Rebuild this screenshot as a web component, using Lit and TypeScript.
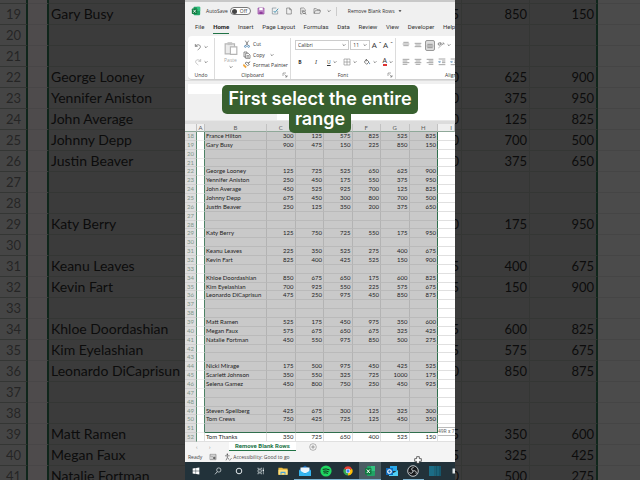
import { LitElement, html, css, svg, nothing } from "lit";
import { customElement, property } from "lit/decorators.js";
import { classMap } from "lit/directives/class-map.js";

type Row = { n: number; name?: string; v?: number[] };

const people: Record<number, [string, number[]]> = {
  18: ["France Hilton", [300, 125, 575, 825, 525, 825]],
  19: ["Gary Busy", [900, 475, 150, 225, 850, 150]],
  22: ["George Looney", [125, 725, 525, 650, 625, 900]],
  23: ["Yennifer Aniston", [250, 450, 175, 550, 375, 950]],
  24: ["John Average", [450, 525, 925, 700, 125, 825]],
  25: ["Johnny Depp", [675, 450, 300, 800, 700, 500]],
  26: ["Justin Beaver", [250, 125, 350, 200, 375, 650]],
  29: ["Katy Berry", [125, 750, 725, 550, 175, 950]],
  31: ["Keanu Leaves", [225, 350, 525, 275, 400, 675]],
  32: ["Kevin Fart", [825, 400, 425, 525, 150, 900]],
  34: ["Khloe Doordashian", [850, 675, 650, 175, 600, 825]],
  35: ["Kim Eyelashian", [700, 925, 550, 225, 575, 675]],
  36: ["Leonardo DiCaprisun", [475, 250, 975, 450, 850, 875]],
  39: ["Matt Ramen", [525, 175, 450, 975, 350, 600]],
  40: ["Megan Faux", [575, 675, 650, 675, 325, 425]],
  41: ["Natalie Fortman", [450, 550, 975, 850, 500, 275]],
  44: ["Nicki Mirage", [175, 500, 975, 450, 425, 525]],
  45: ["Scarlett Johnson", [350, 550, 325, 725, 1000, 175]],
  46: ["Selena Gamez", [450, 800, 750, 250, 450, 925]],
  49: ["Steven Spellberg", [425, 675, 300, 125, 325, 300]],
  50: ["Tom Crews", [750, 425, 725, 125, 450, 350]],
  52: ["Tom Thanks", [350, 725, 650, 400, 525, 150]],
};

const rowsBetween = (from: number, to: number): Row[] =>
  Array.from({ length: to - from + 1 }, (_, i) => {
    const p = people[from + i];
    return { n: from + i, name: p?.[0], v: p?.[1] };
  });

const chevron = html`<svg class="chev" viewBox="0 0 4 4"><path d="M.6 1.3 2 2.7 3.4 1.3" fill="none" stroke="#555" stroke-width=".7"/></svg>`;

const line = (d: string, color = "#555", w = 0.8) =>
  svg`<path d=${d} fill="none" stroke=${color} stroke-width=${w}/>`;

const glyphs: Record<string, unknown> = {
  excel: svg`<rect x="3" y="1" width="8" height="10" rx="1" fill="#21a366"/><path d="M7 1h4v5H7z" fill="#33c481"/><rect x="1" y="3" width="6.500" height="6.500" rx=".8" fill="#107c41"/>${line("M2.800 4.500 5.800 8M5.800 4.500 2.800 8", "#fff", 1)}`,
  save: svg`<path d="M1.500 1.500h9v9h-9z" fill="#c793cf" stroke="#8e3c9b"/><path d="M3.500 1.500h5v3h-5z" fill="#fff"/><path d="M3.500 7h5v3.500h-5z" fill="#8e3c9b"/>`,
  check: svg`${line("M10 6v4.500H2v-9h6", "#60727e")}${line("M4 6 6 8.200 10.800 2.500", "#2b87a8", 1.300)}`,
  page: line("M2.500 1.500H7L9.500 4v6.500h-7zM7 1.500V4h2.500"),
  preview: svg`${line("M5 10.500H2.500v-9H7L9.500 4v2M4 5h3M4 7h2")}<circle cx="7.500" cy="8" r="2" fill="none" stroke="#444" stroke-width=".9"/>${line("M9 9.500 11 11.300", "#444", 1)}`,
  open: line("M1.500 9.500V2.500h3.500l1 1.500h4v1.500M1.500 9.500 3.500 5.500H11.500L9.800 9.500z"),
  undo: line("M2 1.500V5h3.500M2.200 5C4 2 9 1.800 9.500 5.200 9.700 7.500 7.500 9 5.500 10.500", "#555", 1),
  redo: line("M10 1.500V5H6.500M9.800 5C8 2 3 1.800 2.500 5.200 2.300 7.500 4.500 9 6.500 10.500", "#aaa", 1),
  paste: svg`<path d="M1 2.500h8V11H1z" fill="#ececec" stroke="#b5b5b5"/><path d="M3 1h4v2.500H3z" fill="#c4c4c4"/><path d="M5.500 5H11v6.500H5.500z" fill="#fff" stroke="#b5b5b5"/>`,
  cut: svg`${line("M3.500 1 7.800 8.300M8.500 1 4.200 8.300", "#444", 0.9)}<circle cx="3.600" cy="9.600" r="1.400" fill="none" stroke="#2b6fa8"/><circle cx="8.400" cy="9.600" r="1.400" fill="none" stroke="#2b6fa8"/>`,
  copy: svg`${line("M4 9H1.500V1.500H6V3", "#444", 0.9)}${line("M4 3.500h4L10.500 6v5H4zM5.500 7h3.500M5.500 9h3.500", "#444", 0.9)}`,
  brush: svg`<path d="M1 4 5.500 8.500 4 11 0 7z" fill="#f0a63a"/><path d="M3 3 6.800 7 9.500 5.500 6 1.500z" fill="#fff" stroke="#444" stroke-width=".9"/>${line("M7.500 3.500 10.800 1", "#444", 1.300)}`,
  grid: svg`${line("M1.500 1.500h9v9h-9z", "#777", 0.8)}${line("M6 1.500v9M1.500 6h9", "#777", 0.8)}`,
  fill: svg`${line("M5 2 9 6 5.500 9.500 2 6zM5 2v3", "#444", 1)}<path d="M10 6.500q1.500 2 0 3-1.500-1 0-3" fill="#2b6fa8"/>`,
  top: line("M2 2h8M1 4.500h10M2 7h8"),
  middle: line("M1 3.500h10M2 6h8M1 8.500h10"),
  bottom: line("M2 5h8M1 7.500h10M2 10h8"),
  left: line("M1 2h10M1 4.500h7M1 7h10M1 9.500h7"),
  center: line("M1 2h10M2.500 4.500h7M1 7h10M2.500 9.500h7"),
  right: line("M1 2h10M4 4.500h7M1 7h10M4 9.500h7"),
  indent: svg`${line("M1 1.500h10M6 4.500h5M6 7h5M1 10h10")}${line("M4.500 5.800H1M2.500 4.300 1 5.800 2.500 7.300", "#2b6fa8")}`,
  orient: svg`${line("M2 10.500 10.500 3M10.500 3H8M10.500 3v2.500", "#777")}<circle cx="3.500" cy="4.500" r="1.800" fill="none" stroke="#555"/>${line("M5 1.500 8 6", "#555")}`,
  launch: line("M2 8V2h6M5 5l5 5M10 6v4H6", "#555", 1),
  macro: svg`${line("M1.500 2h9v8h-9zM1.500 4.500h9M4.500 4.500V10", "#666")}<circle cx="8" cy="7.500" r="2" fill="#666"/>`,
  access: svg`<circle cx="5" cy="2" r="1.200" fill="#555"/>${line("M1.500 4.200h7M5 4.200v3M5 7 3 11M5.500 7 7 9", "#555", 1)}${line("M7 9.500l1.500 1.500L11.500 7.500", "#555", 0.9)}`,
  plus: svg`<circle cx="6" cy="6" r="5" fill="none" stroke="#777" stroke-width=".8"/>${line("M6 3.300v5.400M3.300 6h5.400", "#777", 1)}`,
  windows: svg`<path d="M1 2.300 5.500 1.600V5.700H1zM6.100 1.500 11 .8V5.700H6.100zM1 6.300h4.500v4.100L1 9.700zM6.100 6.300H11v4.900L6.100 10.500z" fill="#fff"/>`,
  search: svg`<circle cx="7.200" cy="4.500" r="3.200" fill="none" stroke="#e8eef0"/>${line("M5 7 1.500 11", "#e8eef0", 1.100)}`,
  cortana: svg`<circle cx="6" cy="6" r="4.200" fill="none" stroke="#eef3f5" stroke-width="1.400"/>`,
  tasks: svg`${line("M1.500 1v2h5V1M1.500 11V9h5v2M1.500 4.300h5v3.400h-5z", "#e8eef0", 0.9)}${line("M9.500 1v10", "#e8eef0", 0.9)}<path d="M8.500 4h2v2h-2z" fill="#e8eef0"/>`,
  folder: svg`<path d="M.5 2h4.500l1 1h5.500v7.500H.5z" fill="#e9b93c"/><path d="M.5 4.500h11v6H.5z" fill="#ffdf7a"/><path d="M3 7h6v3.500H7.800V8.500H4.200v2H3z" fill="#4aa3d8"/>`,
  mail: svg`<path d="M0 5 6 .5 12 5v6H0z" fill="#1066b5"/><path d="M1.500 2.500h9V8h-9z" fill="#eaf6fd"/><path d="M0 5 6 8.500 12 5v6H0z" fill="#35b6f0"/>`,
  spotify: svg`<circle cx="6" cy="6" r="5.600" fill="#1ed760"/>${line("M2.700 4.400q3.500-1.200 6.800.5M3.200 6.300q2.900-.9 5.500.5M3.600 8q2.300-.6 4.300.4", "#10301d", 1)}`,
  chrome: svg`<path d="M6 6 1.200 3.200A5.500 5.500 0 0 1 10.800 3.200z" fill="#e94235"/><path d="M6 6 1.200 3.200A5.500 5.500 0 0 0 6 11.500z" fill="#34a853"/><path d="M6 6 10.800 3.200A5.500 5.500 0 0 1 6 11.500z" fill="#fbbc05"/><circle cx="6" cy="6" r="2.700" fill="#fff"/><circle cx="6" cy="6" r="2" fill="#4285f4"/>`,
  outlook: svg`<path d="M4 1h7v5H4z" fill="#28a8ea"/><path d="M3 5l4.500 3L12 5v6H3z" fill="#50d0f5"/><path d="M0 3h7v7H0z" fill="#0f6cbd"/><circle cx="3.500" cy="6.500" r="1.800" fill="none" stroke="#fff" stroke-width="1.100"/>`,
  obs: svg`<circle cx="6" cy="6" r="5.300" fill="#17191c" stroke="#d5d9db" stroke-width=".9"/>${line("M6 6C4 5 4.500 2.500 6.500 2.500M6 6c2-1 4 .8 3 2.700M6 6c0 2.200-2.300 3-3.600 1.500", "#d5d9db", 1)}`,
  panels: svg`<path d="M0 1h5.500v10H0z" fill="#1b6d86"/><path d="M6 1h6v10H6z" fill="#15566b"/>${line("M6 1v10M9 1v10", "#2c90ab", 0.5)}`,
  sheet: svg`<path d="M7 1h5v10H7z" fill="#dfe6e9"/>`,
};

const icon = (name: string, cls = "s8") =>
  html`<svg class="ico ${cls}" viewBox="0 0 12 12" aria-hidden="true">${glyphs[name]}</svg>`;

const tool = (label: string, name: string, opts: { drop?: boolean; on?: boolean; cls?: string } = {}) => html`
  <button class=${classMap({ tool: true, on: !!opts.on })} aria-label=${label}>
    ${icon(name, opts.cls)}${opts.drop ? chevron : nothing}
  </button>`;

const reset = css`
  * { box-sizing: border-box; }
  button, input, select {
    font: inherit; color: inherit; background: none; border: 0; padding: 0; margin: 0;
    border-radius: 0; appearance: none; min-width: 0;
  }
  .ico { display: block; flex: none; }
  .s6 { width: 6px; height: 6px; }
  .s8 { width: 8px; height: 8px; }
  .s10 { width: 10px; height: 10px; }
  .s12 { width: 12px; height: 12px; }
  .s14 { width: 14px; height: 14px; }
  .chev { width: 4px; height: 4px; flex: none; display: block; }
`;

@customElement("zoomed-sheet")
export class ZoomedSheet extends LitElement {
  @property() side: "left" | "right" = "left";

  static styles = [reset, css`
    :host { display: flex; overflow: hidden; background: #3b3b3b; min-width: 0; }
    :host([side="right"]) { justify-content: flex-end; }
    table { border-collapse: separate; border-spacing: 0; table-layout: fixed; flex: none;
      font: 13px/20px Lato, "Noto Sans", sans-serif; color: #0c0c0c; align-self: flex-start; }
    .l { width: 100%; }
    .r { width: 246px; }
    tr { height: 21px; }
    tr.part { height: 4px; }
    tr.part > * { line-height: 3px; }
    td, th { padding: 0; font-weight: 400; border-bottom: 1px solid #343634; white-space: nowrap; overflow: hidden; }
    th { width: 28px; padding-right: 5px; text-align: right; color: #252525; background: #454545;
      border-right: 2px solid #10261b; }
    .a { width: 21px; background: #4e4b4c; border-right: 2px solid #10261b; border-bottom-color: #484647; }
    .name { padding-left: 2px; font-size: 14px; }
    .num { width: 68px; text-align: right; padding-right: 2px; border-right: 1px solid #343634; }
    .last { border-right: 2px solid #10261b; }
    .out { background: #4b4b4b; border-bottom-color: #454545; }
  `];

  render() {
    const rows = rowsBetween(18, 41);
    const left = this.side === "left";
    return html`<table class=${left ? "l" : "r"}>
      <tbody>
        ${rows.map((r) => {
          const hidden = r.n === 18;
          return html`<tr class=${hidden ? "part" : ""}>
            ${left
              ? html`<th scope="row">${hidden ? "" : r.n}</th><td class="a"></td><td class="name">${hidden ? "" : r.name}</td>`
              : html`${[3, 4, 5].map((c) => html`<td class="num ${c === 5 ? "last" : ""}">${hidden ? "" : r.v?.[c]}</td>`)}<td class="out"></td>`}
          </tr>`;
        })}
      </tbody>
    </table>`;
  }
}

@customElement("excel-ribbon")
export class ExcelRibbon extends LitElement {
  static styles = [reset, css`
    :host { display: block; background: #f0f0f0; color: #333; font: 5px/8px "Open Sans", sans-serif;
      border-top: 2px solid #c8c8c8; overflow: hidden; white-space: nowrap; }
    .title { display: flex; align-items: center; height: 18px; padding-left: 6px; gap: 5px; }
    .auto { display: flex; align-items: center; gap: 2px; position: relative; }
    .switch { display: flex; align-items: center; gap: 3px; width: 21px; height: 8px; border: 1px solid #777;
      border-radius: 4px; background: #fff; font-size: 5px; line-height: 6px; padding-left: 1px; }
    .knob { width: 5px; height: 5px; border-radius: 50%; background: #444; }
    .auto input { position: absolute; inset: 0; opacity: 0; }
    .quick { display: flex; align-items: center; gap: 4px; }
    .sep { width: 1px; height: 9px; background: #ccc; margin-right: 6px; }
    .file { display: flex; align-items: center; gap: 3px; }
    .tabs { display: flex; gap: 9px; padding-left: 10px; height: 16px; font: 6px/8px Roboto, sans-serif; }
    .tabs button { height: 14px; border-bottom: 1px solid transparent; }
    .tabs .active { font-weight: 700; border-color: #217346; color: #222; }
    .ribbon { display: flex; height: 44px; margin-left: 3px; padding-top: 2px; background: #fff; border-radius: 4px 0 0 4px;
      border-bottom: 1px solid #d0d0d0; }
    .group { display: grid; grid-template-rows: 1fr 8px; flex: none; border-right: 1px solid #dcdcdc; }
    .undo { width: 27px; }
    .clip { width: 76px; }
    .font { width: 105px; }
    .align { width: 120px; border: 0; }
    .foot { display: flex; align-items: center; justify-content: center; position: relative; }
    .foot .ico { position: absolute; right: 2px; }
    .col { display: flex; flex-direction: column; justify-content: space-evenly; align-items: center; }
    .tool { display: flex; align-items: center; justify-content: center; gap: 2px; min-width: 10px; height: 11px; }
    .tool.on { background: #ddd; border: 1px solid #999; border-radius: 2px; }
    .clipbody { display: grid; grid-template-columns: 25px 1fr; padding-left: 3px; }
    .paste { display: flex; flex-direction: column; align-items: center; color: #aaa; justify-content: center; gap: 1px; }
    .cmds { display: flex; flex-direction: column; justify-content: space-evenly; }
    .cmds button { display: flex; align-items: center; gap: 2px; height: 9px; }
    .cmds .chev { margin-left: 3px; }
    .lines { display: flex; flex-direction: column; padding: 1px 2px 3px 4px; justify-content: space-between; }
    .line { display: flex; align-items: center; justify-content: space-between; height: 12px; }
    .combo { display: flex; align-items: center; border: 1px solid #ccc; height: 10px; padding: 0 2px; }
    .combo select { flex: 1; }
    .face { width: 54px; }
    .size { width: 20px; }
    .big { font: 8px/8px "Open Sans", sans-serif; }
    .b { font-weight: 700; }
    .i { font-style: italic; font-family: "Liberation Serif", serif; font-size: 6px; }
    .u { text-decoration: underline; }
    .red { border-bottom: 2px solid #d33; line-height: 6px; font-size: 7px; }
    .alignlines { padding-left: 5px; }
    .alignlines .line { justify-content: flex-start; gap: 2px; }
    .alignlabel { justify-content: flex-start; padding-left: 49px; }
    .formula { display: grid; grid-template-columns: 89px 1fr; height: 40px; padding: 3px 0 0 3px; border-top: 1px solid #ddd; align-items: start; }
    .formula input { width: 100%; background: #fff; }
    .cell { height: 10px; }
    .fx { height: 36px; }
  `];

  render() {
    return html`
      <div class="title">
        ${icon("excel", "s10")}
        <label class="auto">AutoSave
          <input type="checkbox" role="switch" aria-label="AutoSave">
          <span class="switch"><span class="knob"></span>Off</span>
        </label>
        <div class="quick">
          ${tool("Save", "save", { cls: "s8" })}
          ${tool("Check accessibility", "check")}
          ${tool("New", "page")}
          ${tool("Print preview", "preview")}
          ${tool("Open", "open")}
        </div>
        ${chevron}<span class="sep"></span>
        <span class="file">Remove Blank Rows <svg class="chev" viewBox="0 0 4 4"><path d="M.5 1.200h3L2 3z" fill="#333"/></svg></span>
      </div>
      <nav class="tabs">
        ${["File", "Home", "Insert", "Page Layout", "Formulas", "Data", "Review", "View", "Developer", "Help"].map(
          (t) => html`<button class=${t === "Home" ? "active" : ""}>${t}</button>`)}
      </nav>
      <div class="ribbon">
        <section class="group undo">
          <div class="col">${tool("Undo", "undo", { drop: true })}${tool("Redo", "redo", { drop: true })}</div>
          <div class="foot">Undo</div>
        </section>
        <section class="group clip">
          <div class="clipbody">
            <button class="paste">${icon("paste", "s14")}<span>Paste</span>${chevron}</button>
            <div class="cmds">
              <button>${icon("cut")}Cut</button>
              <button>${icon("copy")}Copy ${chevron}</button>
              <button>${icon("brush")}Format Painter</button>
            </div>
          </div>
          <div class="foot">Clipboard ${icon("launch", "s6")}</div>
        </section>
        <section class="group font">
          <div class="lines">
            <div class="line">
              <span class="combo face"><select aria-label="Font"><option>Calibri</option></select>${chevron}</span>
              <span class="combo size"><select aria-label="Font size"><option>11</option></select>${chevron}</span>
              <button class="tool big" aria-label="Increase font size">A<sup>ˆ</sup></button>
              <button class="tool big" aria-label="Decrease font size">A<sup>ˇ</sup></button>
            </div>
            <div class="line">
              <button class="tool b">B</button>
              <button class="tool i">I</button>
              <button class="tool"><span class="u">U</span>${chevron}</button>
              ${tool("Borders", "grid", { drop: true })}
              ${tool("Fill", "fill", { drop: true })}
              <button class="tool"><span class="red">A</span>${chevron}</button>
            </div>
          </div>
          <div class="foot">Font ${icon("launch", "s6")}</div>
        </section>
        <section class="group align">
          <div class="lines alignlines">
            <div class="line">
              ${tool("Top", "top")}${tool("Middle", "middle")}${tool("Bottom", "bottom", { on: true })}${tool("Orientation", "orient", { drop: true })}
            </div>
            <div class="line">
              ${tool("Left", "left")}${tool("Center", "center")}${tool("Right", "right")}${tool("Decrease indent", "indent")}${tool("Increase indent", "indent")}
            </div>
          </div>
          <div class="foot alignlabel">Alignment</div>
        </section>
      </div>
      <div class="formula">
        <input class="cell" aria-label="Name box">
        <input class="fx" aria-label="Formula">
      </div>`;
  }
}

@customElement("excel-grid")
export class ExcelGrid extends LitElement {
  static styles = [reset, css`
    :host { display: flex; min-height: 0; overflow: hidden; background: #fff; }
    table { display: flex; flex-direction: column; flex: 1; min-width: 0; font: 6px/8px Lato, "Noto Sans", sans-serif; color: #1c1c1c; }
    tr { display: grid; grid-template-columns: 12px 8px 62px repeat(6, minmax(0, 1fr)) 17px; min-height: 0; }
    thead tr { height: 12px; background: #dcdcdc; color: #5c5c5c; padding-top: 3px; border-top: 1px solid #e8e8e8; }
    thead th { border-right: 1px solid #c2c2c2; border-bottom: 1px solid #8fa899; line-height: 7px; }
    thead .plain { background: #efefef; }
    thead .far { text-align: right; padding-right: 2px; }
    tbody { display: grid; grid-auto-rows: minmax(0, 1fr); flex: 1; min-height: 0; }
    th, td { padding: 0; font-weight: 400; white-space: nowrap; min-width: 0; min-height: 0; overflow: hidden; }
    tbody th { background: #dedede; color: #7f958a; text-align: right; padding-right: 2px; border-right: 1px solid #5b8c72;
      border-bottom: 1px solid #cfcfcf; }
    td { border-right: 1px solid #b3b3b3; border-bottom: 1px solid #bababa; background: #c9c9c9; }
    td.a { background: #fff; border-right: 1px solid #4d8266; border-bottom-color: #eee; }
    td.name { padding-left: 1px; }
    td.num { text-align: right; padding-right: 1px; }
    td.h { border-right: 1px solid #2f6f4d; }
    td.out { background: #fff; border-bottom-color: #e0e0e0; border-right: 0; }
    tr.end td:not(.a, .out) { border-bottom-color: #2f6f4d; }
    tr.free td { background: #fff; border-color: #e0e0e0; }
  `];

  render() {
    return html`<table>
      <thead><tr><th class="plain"></th>${["A", "B", "C", "D", "E", "F", "G", "H", "I"].map(
        (c) => html`<th scope="col" class=${c === "A" ? "plain" : c === "I" ? "plain far" : ""}>${c}</th>`)}</tr></thead>
      <tbody>
        ${rowsBetween(18, 52).map((r) => html`
          <tr class=${r.n === 51 ? "end" : r.n === 52 ? "free" : ""}>
            <th scope="row">${r.n}</th><td class="a"></td><td class="name">${r.name}</td>
            ${[0, 1, 2, 3, 4, 5].map((c) => html`<td class="num ${c === 5 ? "h" : ""}">${r.v?.[c]}</td>`)}
            <td class="out"></td>
          </tr>`)}
      </tbody>
    </table>`;
  }
}

@customElement("desktop-foot")
export class DesktopFoot extends LitElement {
  static styles = [reset, css`
    :host { display: block; font: 5px/8px "Open Sans", sans-serif; color: #444; background: #f4f4f4; white-space: nowrap; overflow: hidden; }
    .sheets { display: flex; height: 10px; align-items: center; padding-left: 11px; color: #888; }
    .sheets .nav { width: 13px; text-align: left; }
    .sheets .tab { height: 9px; align-self: flex-start; margin: 0 13px 0 7px; padding: 0 6px; background: #fff; color: #217346;
      font: 700 6px/8px Roboto, sans-serif; border-bottom: 1px solid #217346; }
    .status { display: flex; height: 10px; align-items: center; padding-left: 3px; gap: 7px; }
    .acc { display: flex; align-items: center; gap: 1px; }
    .bar { display: flex; height: 18px; background: #22323a; }
    .bar button { flex: 1; height: 18px; display: flex; align-items: center; justify-content: center;
      border-bottom: 1px solid transparent; }
    .bar .run { border-color: #7fb4d0; }
    .bar .cur { background: #4a5c63; }
    .bar .cutoff { flex: 0 0 9px; justify-content: flex-end; overflow: hidden; }
  `];

  render() {
    const items: [string, string, string, string][] = [
      ["Start", "windows", "s8", ""], ["Search", "search", "s8", ""], ["Cortana", "cortana", "s8", ""],
      ["Task view", "tasks", "s8", ""], ["Files", "folder", "s10", ""], ["Mail", "mail", "s12", "run"],
      ["Music", "spotify", "s12", "run"], ["Browser", "chrome", "s10", "run"], ["Excel", "excel", "s12", "run cur"],
      ["Outlook", "outlook", "s12", ""], ["Recorder", "obs", "s12", "run"], ["Panels", "panels", "s12", ""],
      ["Document", "sheet", "s6", "cutoff"],
    ];
    return html`
      <div class="sheets">
        <button class="nav" aria-label="Previous sheet">‹</button><button class="nav" aria-label="Next sheet">›</button>
        <button class="tab">Remove Blank Rows</button>
        <button aria-label="New sheet">${icon("plus")}</button>
      </div>
      <div class="status"><span>Ready</span>${icon("macro")}<span class="acc">${icon("access")}Accessibility: Good to go</span></div>
      <div class="bar">${items.map(([l, g, s, c]) => html`<button class=${c} aria-label=${l}>${icon(g, s)}</button>`)}</div>`;
  }
}

@customElement("app-root")
export class AppRoot extends LitElement {
  static styles = [reset, css`
    :host { display: grid; grid-template-columns: minmax(0, 1fr) 270px minmax(0, 1fr); grid-template-rows: minmax(0, 1fr);
      height: 100vh; position: relative; overflow: hidden; background: #3b3b3b; }
    main { display: flex; flex-direction: column; min-height: 0; min-width: 0; position: relative; }
    excel-grid { flex: 1; }
    .size { position: absolute; right: 0; bottom: 44px; width: 17px; height: 9px; overflow: hidden;
      background: #fff; border-top: 1px solid #bbb; border-bottom: 1px solid #bbb; font: 5px/7px Roboto, sans-serif; color: #666; white-space: nowrap; }
    .cursor { position: absolute; left: 229px; bottom: 16px; }
    .caption { position: absolute; top: 85px; left: 0; right: 0; display: flex; flex-direction: column; align-items: center;
      margin: 0; color: #fff; font: 600 18px/24px Inter, sans-serif; pointer-events: none; }
    .caption span { background: #38602f; border-radius: 5px; padding: 2px 6px 3px; }
    .caption .second { margin-top: -8px; line-height: 22px; }
  `];

  render() {
    return html`
      <zoomed-sheet side="left"></zoomed-sheet>
      <main>
        <excel-ribbon></excel-ribbon>
        <excel-grid></excel-grid>
        <desktop-foot></desktop-foot>
        <div class="size">49R x 7</div>
        <svg class="cursor ico s8" viewBox="0 0 12 12"><path d="M4 1h4v3h3v4H8v3H4V8H1V4h3z" fill="#fff" stroke="#222"/></svg>
      </main>
      <zoomed-sheet side="right"></zoomed-sheet>
      <p class="caption"><span>First select the entire</span><span class="second">range</span></p>`;
  }
}
